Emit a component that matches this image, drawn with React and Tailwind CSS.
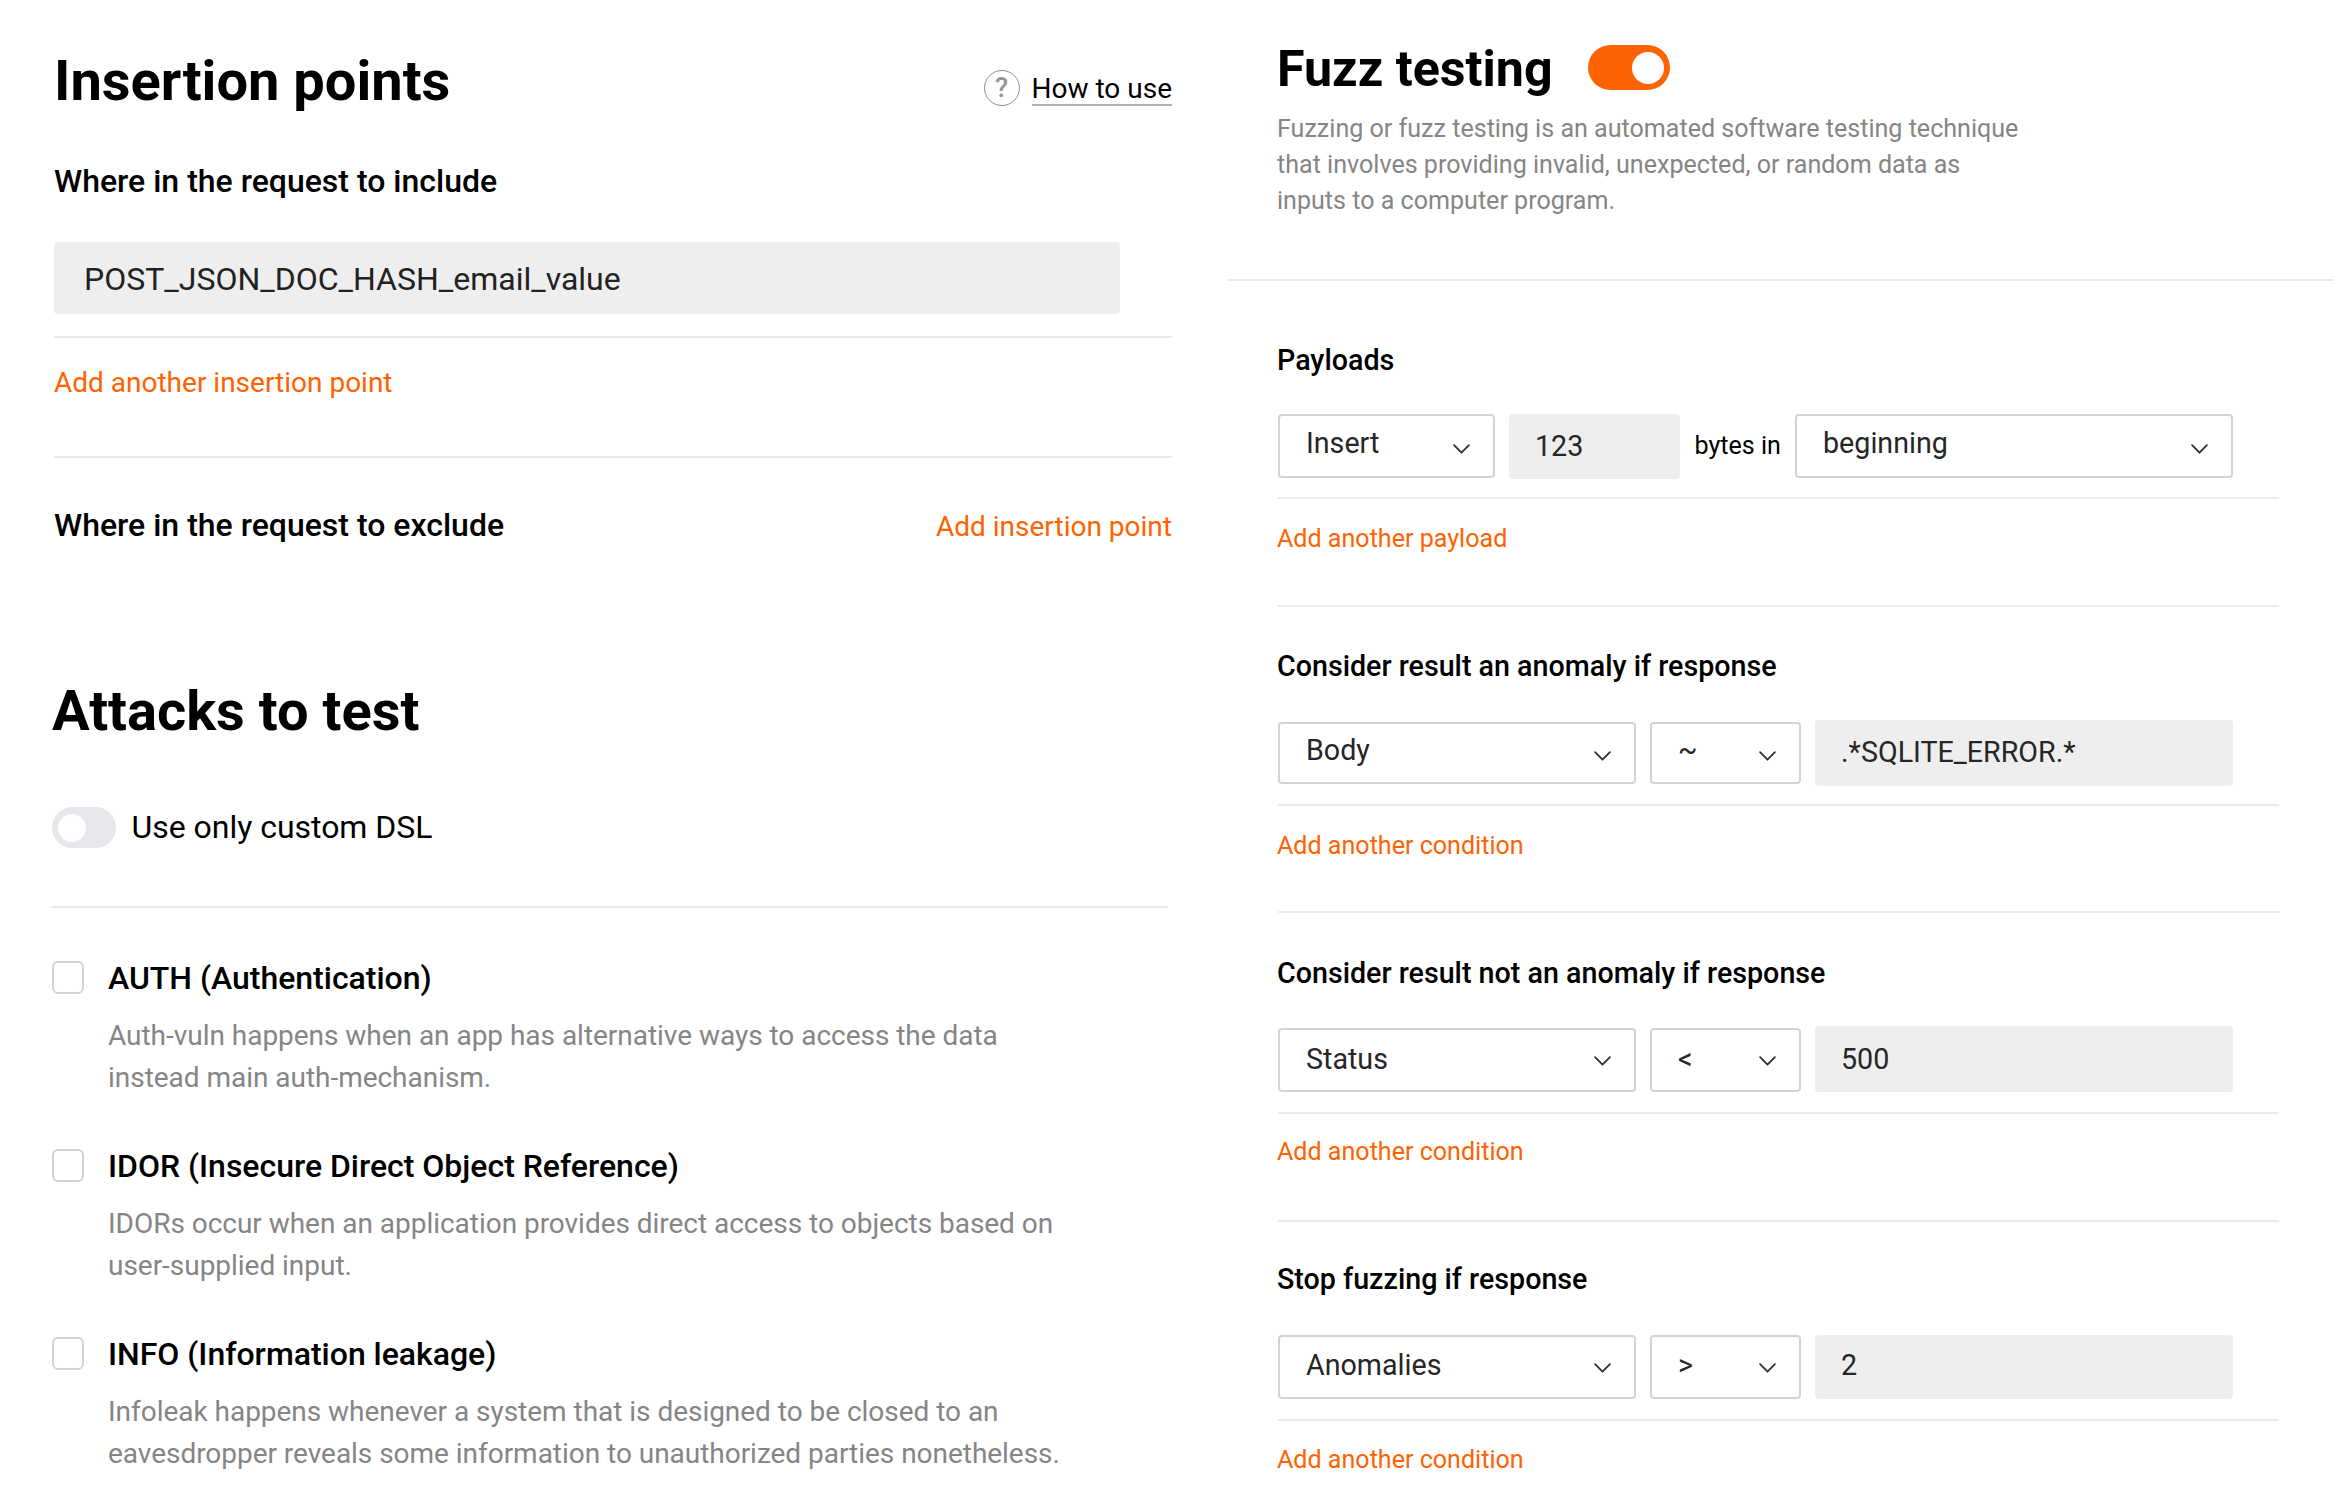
function Chevron({ className }) {
  return (
    <svg className={`shrink-0 ${className}`} width="17" height="10" viewBox="0 0 17 10" fill="none" stroke="#303030" strokeWidth="1.8" strokeLinecap="round" strokeLinejoin="round">
      <path d="M1.1 1.1 8.5 8.7l7.4-7.6" />
    </svg>
  );
}

function Select({ value, className, textClass, chevronClass }) {
  return (
    <button className={`flex items-start justify-between rounded-[4px] border-2 border-[#d3d3d3] bg-white pl-[26px] pr-[23px] text-[28.67px] text-[#262626] ${className}`}>
      <span className={textClass}>{value}</span>
      <Chevron className={chevronClass} />
    </button>
  );
}

function Field({ value, className }) {
  return <div className={`rounded-[4px] bg-[#eeeeee] pl-[26px] text-[28.67px] text-[#262626] ${className}`}>{value}</div>;
}

function Heading({ children, className }) {
  return <h2 className={`-ml-px text-[28.67px] leading-[36px] font-medium text-black ${className}`}>{children}</h2>;
}

function AddLink({ children, className }) {
  return <a className={`-ml-px block text-[25.08px] leading-[33px] text-[#ff6200] ${className}`}>{children}</a>;
}

function Line({ className }) {
  return <div className={`h-[2px] w-[1001px] bg-[#eaeaea] ${className}`} />;
}

const conditions = [
  {
    title: "Consider result an anomaly if response", field: "Body", op: "~", value: ".*SQLITE_ERROR.*",
    heading: "mt-[41px]", row: "mt-[36px]", select: "mt-[2px] h-[62px]", text: "leading-[52px]", chevron: "mt-[27px]",
    input: "h-[66px] leading-[64px]", line: "mt-[18px]", link: "mt-[23px]", end: "mt-[49px]",
  },
  {
    title: "Consider result not an anomaly if response", field: "Status", op: "<", value: "500",
    heading: "mt-[42px]", row: "mt-[35px]", select: "mt-[2px] h-[64px]", text: "leading-[58px]", chevron: "mt-[26px]",
    input: "h-[66px] leading-[66px]", line: "mt-[20px]", link: "mt-[21px]", end: "mt-[52px]",
  },
  {
    title: "Stop fuzzing if response", field: "Anomalies", op: ">", value: "2",
    heading: "mt-[39px]", row: "mt-[38px]", select: "h-[64px]", text: "leading-[56px]", chevron: "mt-[26px]",
    input: "h-[64px] leading-[60px]", line: "mt-[18px]", link: "mt-[22px]", end: null,
  },
];

function Condition({ c }) {
  return (
    <section>
      <div className="flow-root"><Heading className={c.heading}>{c.title}</Heading></div>
      <div className="flow-root">
        <div className={`flex h-[66px] items-start gap-[14px] ${c.row}`}>
          <Select value={c.field} className={`w-[358px] ${c.select}`} textClass={c.text} chevronClass={c.chevron} />
          <Select value={c.op} className={`w-[151px] ${c.select}`} textClass={c.text} chevronClass={c.chevron} />
          <Field value={c.value} className={`w-[418px] ${c.input}`} />
        </div>
      </div>
      <Line className={c.line} />
      <AddLink className={c.link}>Add another condition</AddLink>
      {c.end && <Line className={c.end} />}
    </section>
  );
}

const attacks = [
  ["AUTH (Authentication)", "Auth-vuln happens when an app has alternative ways to access the data", "instead main auth-mechanism."],
  ["IDOR (Insecure Direct Object Reference)", "IDORs occur when an application provides direct access to objects based on", "user-supplied input."],
  ["INFO (Information leakage)", "Infoleak happens whenever a system that is designed to be closed to an", "eavesdropper reveals some information to unauthorized parties nonetheless."],
];

function InsertionPoints() {
  return (
    <section className="w-[1118px] pt-[49px] ml-[54px]">
      <div className="flex items-start justify-between">
        <h1 className="text-[56px] leading-[64px] font-bold">Insertion points</h1>
        <div className="mt-[21px] flex gap-[12px]">
          <span className="flex h-[36px] w-[36px] items-center justify-center rounded-full border-[1.5px] border-[#8f8f8f] text-[27px] leading-[32px] font-medium text-[#959595]">?</span>
          <a className="h-[36px] border-b-2 border-[#b0b0b0] text-[28px] leading-[37px]">How to use</a>
        </div>
      </div>
      <h2 className="mt-[48px] text-[32px] leading-[40px] font-medium">Where in the request to include</h2>
      <div className="mt-[41px] h-[72px] w-[1066px] rounded-[4px] bg-[#eeeeee] pl-[30px] text-[32px] leading-[74px] text-[#222]">POST_JSON_DOC_HASH_email_value</div>
      <div className="mt-[22px] h-[2px] bg-[#e8e8e8]" />
      <a className="mt-[28px] block text-[28px] leading-[33px] text-[#ff6200]">Add another insertion point</a>
      <div className="mt-[57px] h-[2px] bg-[#e8e8e8]" />
      <div className="mt-[47px] flex h-[40px] items-baseline justify-between">
        <h2 className="text-[32px] leading-[40px] font-medium">Where in the request to exclude</h2>
        <a className="text-[28px] leading-[33px] text-[#ff6200]">Add insertion point</a>
      </div>
    </section>
  );
}

function Attacks() {
  return (
    <section className="ml-[52px] w-[1116px] pt-[134px]">
      <h1 className="text-[56px] leading-[64px] font-bold">Attacks to test</h1>
      <div className="mt-[64px] flex h-[41px] items-start">
        <div className="flex h-[41px] w-[64px] items-center rounded-full bg-[#e6e7eb] pl-[6px]">
          <div className="h-[28px] w-[28px] rounded-full bg-white" />
        </div>
        <span className="ml-[15.5px] text-[32px] leading-[40px] tracking-[-0.03px]">Use only custom DSL</span>
      </div>
      <div className="mt-[58px] h-[2px] bg-[#e8e8e8]" />
      <div className="mt-[50px] flex flex-col gap-[47px]">
        {attacks.map(([title, first, second]) => (
          <div key={title} className="flex gap-[24px]">
            <div className="mt-[3px] h-[33px] w-[32px] rounded-[6px] border-2 border-[#d4d4d4]" />
            <div>
              <h3 className="text-[32px] leading-[40px] font-medium tracking-[-0.02px]">{title}</h3>
              <p className="mt-[17px] text-[28px] leading-[42px] tracking-[-0.03px] whitespace-nowrap text-[#858585]">{first}<br />{second}</p>
            </div>
          </div>
        ))}
      </div>
    </section>
  );
}

function FuzzTesting() {
  return (
    <div className="w-[1106px] pt-[41px]">
      <header className="pl-[49px]">
        <div className="flex h-[56px] items-start">
          <h1 className="w-[311px] text-[50.2px] leading-[56px] font-bold whitespace-nowrap">Fuzz testing</h1>
          <div className="mt-[4px] flex h-[45px] w-[82px] items-center justify-end rounded-full bg-[#ff6200] pr-[6px]">
            <div className="h-[32px] w-[32px] rounded-full bg-white" />
          </div>
        </div>
        <p className="mt-[14px] text-[25.08px] leading-[36px] whitespace-nowrap text-[#858585]">
          Fuzzing or fuzz testing is an automated software testing technique<br />
          that involves providing invalid, unexpected, or random data as<br />
          inputs to a computer program.
        </p>
      </header>
      <div className="mt-[60px] h-[2px] bg-[#ececec]" />
      <div className="pl-[50px]">
        <section className="flow-root">
          <Heading className="mt-[61px]">Payloads</Heading>
          <div className="mt-[36px] flex h-[66px] items-start">
            <Select value="Insert" className="h-[64px] w-[217px]" textClass="leading-[54px]" chevronClass="mt-[28px]" />
            <Field value="123" className="ml-[14px] h-[65px] w-[170.5px] leading-[64px]" />
            <span className="ml-[15px] w-[100.5px] text-[25.08px] leading-[63px]">bytes in</span>
            <Select value="beginning" className="h-[64px] w-[438px]" textClass="leading-[54px]" chevronClass="mt-[28px]" />
          </div>
          <Line className="mt-[17px]" />
          <AddLink className="mt-[23px]">Add another payload</AddLink>
          <Line className="mt-[50px]" />
        </section>
        {conditions.map((c) => <Condition key={c.title} c={c} />)}
      </div>
    </div>
  );
}

export default function App() {
  return (
    <div className="flex h-[1500px] w-[2334px] overflow-hidden bg-white font-['Roboto',sans-serif] text-black">
      <div className="w-[1228px] shrink-0">
        <InsertionPoints />
        <Attacks />
      </div>
      <FuzzTesting />
    </div>
  );
}
